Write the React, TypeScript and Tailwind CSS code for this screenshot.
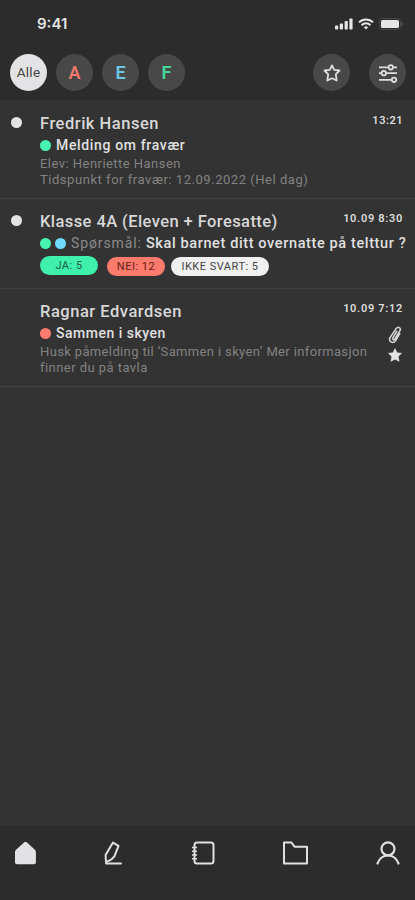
import React from 'react';

interface Message {
  id: number;
  sender: string;
  senderStyle: string;
  time: string;
  timeStyle: string;
  unread: boolean;
  starred?: boolean;
  groups: string[];
  prefix?: string;
  subject: string;
  subjectStyle: string;
  lines: { text: string; style: string }[];
  answers?: { label: string; style: string }[];
  rowStyle: string;
}

const filters = [
  { label: 'Alle', style: 'bg-[#e3e3e5] text-[#464646] text-[13.5px] tracking-[0.3px]' },
  { label: 'A', style: 'bg-[#484848] text-[#f4796d] text-[18px] font-semibold' },
  { label: 'E', style: 'bg-[#484848] text-[#6cc8e0] text-[18px] font-semibold' },
  { label: 'F', style: 'bg-[#484848] text-[#45d79c] text-[18px] font-semibold' },
];

const messages: Message[] = [
  {
    id: 1,
    sender: 'Fredrik Hansen',
    senderStyle: 'tracking-[0.52px]',
    time: '13:21',
    timeStyle: 'tracking-[0.5px]',
    unread: true,
    groups: ['bg-[#48f5b0]'],
    subject: 'Melding om fravær',
    subjectStyle: 'text-[14px] tracking-[0.65px]',
    lines: [
      { text: 'Elev: Henriette Hansen', style: 'tracking-[0.46px]' },
      { text: 'Tidspunkt for fravær: 12.09.2022 (Hel dag)', style: 'tracking-[0.54px]' },
    ],
    rowStyle: 'h-[99px] pt-[13px]',
  },
  {
    id: 2,
    sender: 'Klasse 4A (Eleven + Foresatte)',
    senderStyle: 'tracking-[0.42px]',
    time: '10.09 8:30',
    timeStyle: 'tracking-[0.7px]',
    unread: true,
    groups: ['bg-[#48f5b0]', 'bg-[#6fdcff]'],
    prefix: 'Spørsmål:',
    subject: 'Skal barnet ditt overnatte på telttur ?',
    subjectStyle: 'text-[14.5px] tracking-[0.62px]',
    lines: [],
    answers: [
      { label: 'JA: 5', style: 'w-[58px] mr-[9px] bg-[#3ef0ab] text-[#1f5a45]' },
      { label: 'NEI: 12', style: 'w-[58px] mr-[6px] mt-px bg-[#fd7a6d] text-[#5c1f1a]' },
      { label: 'IKKE SVART: 5', style: 'w-[98px] mt-px bg-[#f0f0f0] text-[#444444]' },
    ],
    rowStyle: 'h-[90px] pt-[12px]',
  },
  {
    id: 3,
    sender: 'Ragnar Edvardsen',
    senderStyle: 'tracking-[0.52px]',
    time: '10.09 7:12',
    timeStyle: 'tracking-[0.7px]',
    unread: false,
    starred: true,
    groups: ['bg-[#ff7b6e]'],
    subject: 'Sammen i skyen',
    subjectStyle: 'text-[14px] tracking-[0.5px]',
    lines: [
      { text: 'Husk påmelding til ‘Sammen i skyen’ Mer informasjon', style: 'tracking-[0.36px]' },
      { text: 'finner du på tavla', style: 'tracking-[0.45px]' },
    ],
    rowStyle: 'h-[98px] pt-[12px]',
  },
];

function StatusBar() {
  return (
    <div className="h-[48px] flex items-center justify-between pl-[37px] pr-[12px]">
      <span className="font-['Inter',sans-serif] text-[15px] font-semibold text-[#e4e4e4]">9:41</span>
      <div className="flex items-center gap-[5px] text-[#e6e6e6]">
        <svg width="18" height="12" viewBox="0 0 18 12" fill="currentColor">
          <rect x="0" y="7.5" width="3.2" height="4" rx="0.8" />
          <rect x="4.8" y="5.5" width="3.2" height="6" rx="0.8" />
          <rect x="9.6" y="3" width="3.2" height="8.5" rx="0.8" />
          <rect x="14.4" y="0.5" width="3.2" height="11" rx="0.8" />
        </svg>
        <svg width="16" height="12" viewBox="0 0 16 12" fill="none" stroke="currentColor" strokeWidth="2">
          <path d="M1 4.4a10 10 0 0 1 14 0" />
          <path d="M3.6 7.2a6.2 6.2 0 0 1 8.8 0" />
          <path d="M8 11.5 5.8 9.2a3.2 3.2 0 0 1 4.4 0z" fill="currentColor" stroke="none" />
        </svg>
        <svg width="24" height="12" viewBox="0 0 24 12">
          <rect x="0.5" y="0.5" width="21" height="11" rx="3" fill="none" stroke="#484848" />
          <rect x="2" y="2" width="18" height="8" rx="1.6" fill="currentColor" />
          <path d="M22.6 4.2v3.6c.8-.3 1.2-1 1.2-1.8s-.4-1.5-1.2-1.8z" fill="#666666" />
        </svg>
      </div>
    </div>
  );
}

function Header() {
  return (
    <header className="h-[100px] shrink-0 bg-[#2c2c2c]">
      <StatusBar />
      <div className="flex items-center justify-between pt-[6px] pl-[10px] pr-[9px]">
        <div className="flex gap-[9px]">
          {filters.map((filter) => (
            <button
              key={filter.label}
              className={`size-[37px] rounded-full flex items-center justify-center ${filter.style}`}
            >
              {filter.label}
            </button>
          ))}
        </div>
        <div className="flex gap-[19px]">
          <button className="size-[37px] rounded-full bg-[#484848] flex items-center justify-center">
            <svg width="18" height="18" viewBox="0 0 18 18" fill="none" stroke="#dedede" strokeWidth="1.8" strokeLinejoin="round">
              <path d="M9 1.4 11.2 5.9l5.3.6-3.7 3.8.9 6.2L9 14.3l-4.7 2.2.9-6.2-3.7-3.8 5.3-.6z" />
            </svg>
          </button>
          <button className="size-[37px] rounded-full bg-[#484848] flex items-center justify-center">
            <svg width="20" height="20" viewBox="0 0 20 20" fill="none" stroke="#dedede" strokeWidth="1.8">
              <path d="M1 4.3h9.5M15.2 4.3H19M1 10.2h2.5M8 10.2h11M1 16.8h12.5" />
              <circle cx="12.8" cy="4.3" r="2.2" />
              <circle cx="5.8" cy="10.2" r="2.2" />
              <circle cx="16" cy="16.8" r="2.2" />
            </svg>
          </button>
        </div>
      </div>
    </header>
  );
}

function MessageRow({ message }: { message: Message }) {
  return (
    <li className={`flex border-b border-[#404040] ${message.rowStyle}`}>
      <div className="w-[40px] shrink-0 pl-[11px] pt-[4px]">
        {message.unread && <div className="size-[11px] rounded-full bg-[#e4e4e4]" />}
      </div>
      <div className="flex-1 min-w-0 whitespace-nowrap">
        <div className="h-[22px] flex justify-between pr-[12px]">
          <h2 className={`text-[16.5px] leading-[22px] font-medium text-[#d8d8d8] ${message.senderStyle}`}>
            {message.sender}
          </h2>
          <time className={`text-[11px] leading-[15px] font-semibold text-[#dddddd] ${message.timeStyle}`}>
            {message.time}
          </time>
        </div>
        <div className="h-[20px] flex items-center">
          <div className="flex gap-[4px] mr-[5px]">
            {message.groups.map((group) => (
              <span key={group} className={`size-[11px] rounded-full ${group}`} />
            ))}
          </div>
          <div className="flex items-baseline gap-[4px]">
            {message.prefix && (
              <span className="text-[14px] leading-[20px] text-[#8a8a8a] tracking-[0.9px]">{message.prefix}</span>
            )}
            <span className={`leading-[20px] font-medium text-[#e0e0e0] ${message.subjectStyle}`}>
              {message.subject}
            </span>
          </div>
        </div>
        {message.answers && (
          <div className="flex pt-[3px]">
            {message.answers.map((answer) => (
              <span
                key={answer.label}
                className={`h-[19px] pt-px rounded-full flex items-center justify-center text-[11px] tracking-[0.5px] ${answer.style}`}
              >
                {answer.label}
              </span>
            ))}
          </div>
        )}
        <div className="pt-px">
          {message.lines.map((line) => (
            <p key={line.text} className={`text-[13px] leading-[16px] text-[#828282] ${line.style}`}>
              {line.text}
            </p>
          ))}
        </div>
      </div>
      {message.starred && (
        <div className="w-[28px] -ml-[28px] shrink-0 pt-[25px] pr-[13px] flex flex-col items-end gap-[4px]">
          <svg width="14" height="18" viewBox="0 0 14 18" fill="none" stroke="#d4d4d4" strokeWidth="1.6" strokeLinecap="round">
            <path d="M8.7 5.4 4.9 11.8c-.9 1.8.9 2.7 2 1.2l5-8.3c1.500-2.800-1.900-4.800-3.700-2.200L2.200 11.400c-2.200 3.900 2.700 7 5.300 3.300l4.200-7" />
          </svg>
          <svg width="14" height="14" viewBox="0 0 14 14" fill="#e4e4e4" stroke="#e4e4e4" strokeWidth="0.6" strokeLinejoin="round">
            <path d="M7 .6 9 4.8l4.500.5-3.300 3.100.9 4.900L7 11.200l-4.100 2.100.9-4.900L.5 5.300 5 4.800z" />
          </svg>
        </div>
      )}
    </li>
  );
}

function BottomNav() {
  return (
    <nav className="h-[74px] shrink-0 bg-[#2c2c2c] flex justify-between items-start pt-[14px] pl-[13px] pr-[14px] text-[#e0e0e0]">
      <svg width="26" height="26" viewBox="0 0 26 26" fill="#e2e2e4">
        <path d="M11.3 2.2q1.2-1 2.4 0l8.2 7.6q1 1 1 2.2v10.2q0 2-2 2H4q-2 0-2-2V12q0-1.200 1-2.200z" />
      </svg>
      <svg className="-ml-[4px]" width="26" height="26" viewBox="0 0 26 26" fill="none" stroke="currentColor" strokeWidth="2" strokeLinejoin="round" strokeLinecap="round">
        <path d="m13 2.6 5.500 3.300-4 10.300-3 3.200-5.500 2.800-.4-7.200z" />
        <path d="M6 23.500h15" />
      </svg>
      <svg width="26" height="26" viewBox="0 0 26 26" fill="none" stroke="currentColor" strokeWidth="2">
        <rect x="3.5" y="2.5" width="19" height="21" rx="2.5" />
        <path d="M1 7.500h5M1 11.200h5M1 15h5M1 18.700h5" strokeWidth="1.5" />
      </svg>
      <svg width="28" height="26" viewBox="0 0 28 26" fill="none" stroke="currentColor" strokeWidth="2" strokeLinejoin="round">
        <path d="M2 2.500h7.500l3 4.200h12.500v16.800H2z" />
      </svg>
      <svg width="26" height="26" viewBox="0 0 26 26" fill="none" stroke="currentColor" strokeWidth="2.2" strokeLinecap="round">
        <circle cx="13" cy="8.8" r="6.5" />
        <path d="M2.500 23.500C4.500 18.200 8 15.500 13 15.500s8.500 2.700 10.500 8" />
      </svg>
    </nav>
  );
}

export default function App() {
  return (
    <div className="w-[415px] h-[900px] flex flex-col overflow-hidden bg-[#333333] font-['Roboto',sans-serif]">
      <Header />
      <main className="flex-1">
        <ul>
          {messages.map((message) => (
            <MessageRow key={message.id} message={message} />
          ))}
        </ul>
      </main>
      <BottomNav />
    </div>
  );
}
